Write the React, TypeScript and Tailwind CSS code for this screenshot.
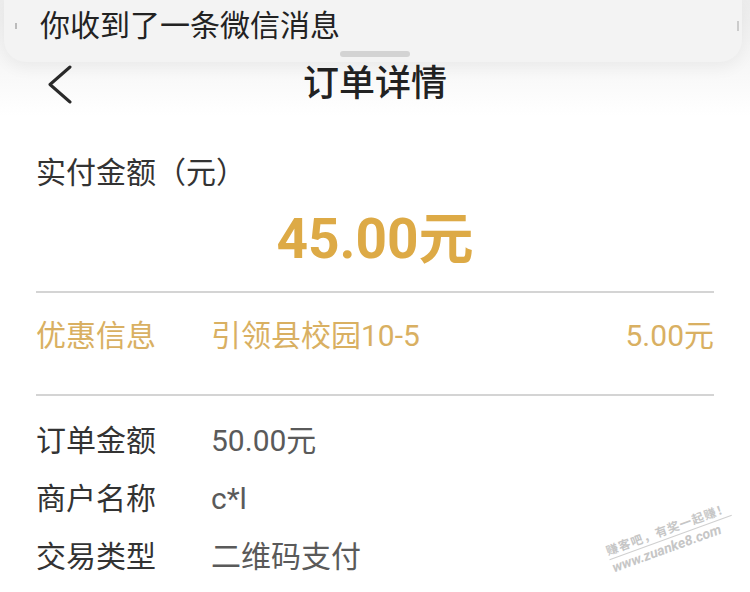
const font = {
  fontFamily: '"Roboto", "Noto Sans CJK SC", sans-serif',
};

function BackArrow() {
  return (
    <svg width="30" height="40" viewBox="0 0 30 40" fill="none">
      <polyline
        points="24,3 4,20.5 24,38"
        stroke="#2a2a2a"
        strokeWidth="3"
        strokeLinecap="round"
        strokeLinejoin="round"
      />
    </svg>
  );
}

function InfoRow({ label, value }: { label: string; value: string }) {
  return (
    <div className="flex h-[58px] items-center text-[30px] leading-[40px]">
      <span className="w-[175px] text-[#333333]">{label}</span>
      <span className="text-[#5a5a5a]">{value}</span>
    </div>
  );
}

export default function App() {
  return (
    <div
      className="relative h-[592px] w-[750px] overflow-hidden bg-white"
      style={font}
    >
      {/* page header */}
      <div className="h-[116px] bg-gradient-to-b from-[#ececec] via-[#f6f6f6] to-white pt-[62px]">
        <div className="grid h-[44px] grid-cols-[1fr_auto_1fr] items-center">
          <div className="pl-[46px]">
            <BackArrow />
          </div>
          <span className="text-[36px] font-medium leading-[44px] text-[#222222]">
            订单详情
          </span>
          <div />
        </div>
      </div>

      {/* notification banner */}
      <div className="absolute left-[4px] right-[8px] top-0 flex h-[62px] flex-col rounded-b-[22px] bg-[#f3f3f3] shadow-[0_6px_16px_rgba(0,0,0,0.05)]">
        <div className="flex items-center pt-[6px]">
          <div className="ml-[11px] h-[6px] w-[2px] bg-[#bbbbbb]" />
          <div className="ml-[23px] flex-1 text-[30px] leading-[40px] text-[#222222]">
            你收到了一条微信消息
          </div>
          <div className="mr-[3px] h-[10px] w-[2px] bg-[#cccccc]" />
        </div>
        <div className="mt-[5px] ml-[336px] h-[6px] w-[70px] rounded-full bg-[#d3d3d3]" />
      </div>

      {/* content */}
      <div className="px-[36px]">
        <div className="mt-[37px] text-[30px] leading-[40px] text-[#333333]">
          实付金额（元）
        </div>
        <div className="mt-[14px] text-center text-[55px] font-bold leading-[64px] text-[#ddaa46]">
          45.00元
        </div>
        <div className="mt-[20px] h-[2px] bg-[#d4d4d4]" />

        <div className="mt-[23px] flex text-[30px] leading-[40px] text-[#d9b062]">
          <span className="w-[175px]">优惠信息</span>
          <span className="flex-1">引领县校园10-5</span>
          <span>5.00元</span>
        </div>
        <div className="mt-[38px] h-[2px] bg-[#d4d4d4]" />

        <div className="mt-[16px]">
          <InfoRow label="订单金额" value="50.00元" />
          <InfoRow label="商户名称" value="c*l" />
          <InfoRow label="交易类型" value="二维码支付" />
        </div>
      </div>

      {/* watermark */}
      <div className="absolute left-[606px] top-[522px] -rotate-[20deg] whitespace-nowrap text-[#c6c6c6]">
        <div className="text-[12px] font-bold leading-[15px] tracking-[1px]">
          赚客吧，有奖一起赚！
        </div>
        <div className="h-[1px] bg-[#d0d0d0]" />
        <div className="text-[14px] font-bold italic leading-[17px]">
          www.zuanke8.com
        </div>
      </div>
    </div>
  );
}
